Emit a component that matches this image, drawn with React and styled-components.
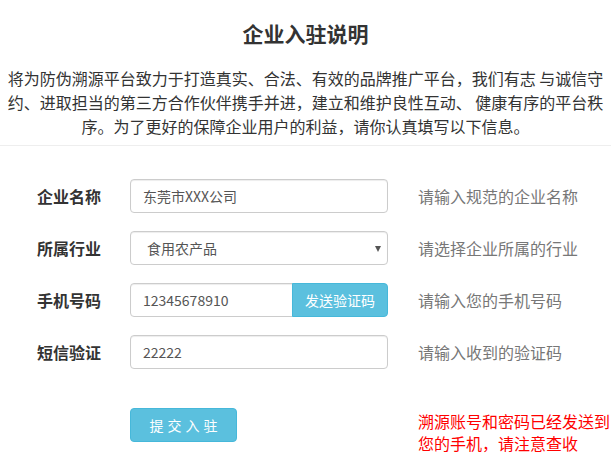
import React from 'react';
import styled, { createGlobalStyle } from 'styled-components';

const GlobalStyle = createGlobalStyle`
    html, body {
        margin: 0;
        padding: 0;
        background: #fff;
    }
    body {
        font-family: "Noto Sans CJK SC", "Liberation Sans", sans-serif;
        color: #333;
    }
`;

const Page = styled.div`
    width: 611px;
`;

const Header = styled.header`
    padding: 18px 4px 7px;
    border-bottom: 1px solid #eee;
    text-align: center;
`;

const Title = styled.h1`
    margin: 0;
    font-size: 21px;
    line-height: 30px;
    font-weight: bold;
    color: #333;
`;

const Intro = styled.p`
    margin: 18px 0 0;
    font-size: 16px;
    line-height: 24px;
    color: #333;
    white-space: nowrap;
`;

const Form = styled.form`
    display: flex;
    flex-direction: column;
    gap: 18px;
    margin-top: 33px;
    padding-left: 37px;
`;

const Row = styled.div`
    display: flex;
    align-items: ${p => (p.$top ? 'flex-start' : 'center')};
    margin-top: ${p => p.$gap || 0}px;
`;

const Label = styled.label`
    width: 93px;
    font-size: 16px;
    font-weight: bold;
    color: #333;
    line-height: 34px;
`;

const Control = styled.div`
    position: relative;
    display: flex;
    width: 258px;
`;

const Input = styled.input`
    box-sizing: border-box;
    width: 100%;
    height: 34px;
    padding: 0 12px;
    border: 1px solid #ccc;
    border-radius: ${p => (p.$joined ? '4px 0 0 4px' : '4px')};
    font-family: inherit;
    font-size: 14px;
    color: #555;
    outline: none;
    box-shadow: inset 0 1px 1px rgba(0, 0, 0, 0.075);
`;

const Select = styled.select`
    box-sizing: border-box;
    width: 100%;
    height: 34px;
    padding: 0 16px;
    border: 1px solid #ccc;
    border-radius: 4px;
    background: #fff;
    font-family: inherit;
    font-size: 14px;
    color: #555;
    appearance: none;
    outline: none;
    box-shadow: inset 0 1px 1px rgba(0, 0, 0, 0.075);
`;

const Caret = styled.span`
    position: absolute;
    right: 7px;
    top: 15px;
    width: 0;
    height: 0;
    border-left: 3.5px solid transparent;
    border-right: 3.5px solid transparent;
    border-top: 6px solid #555;
    pointer-events: none;
`;

const CodeButton = styled.button`
    flex: 0 0 96px;
    height: 34px;
    margin-left: -1px;
    border: 1px solid #46b8da;
    border-radius: 0 4px 4px 0;
    background: #5bc0de;
    color: #fff;
    font-family: inherit;
    font-size: 14px;
    padding: 0;
`;

const Hint = styled.span`
    margin-left: 30px;
    margin-top: ${p => (p.$alert ? '2px' : '0')};
    font-size: 16px;
    line-height: 22px;
    color: ${p => (p.$alert ? '#f00' : '#777')};
`;

const Submit = styled.button`
    width: 107px;
    height: 34px;
    padding: 0 0 0 4px;
    border: 1px solid #46b8da;
    border-radius: 4px;
    background: #5bc0de;
    color: #fff;
    font-family: inherit;
    font-size: 14px;
    letter-spacing: 4px;
`;

const fields = [
    { label: '企业名称', value: '东莞市XXX公司', hint: '请输入规范的企业名称' },
    { label: '所属行业', select: ['食用农产品'], hint: '请选择企业所属的行业' },
    { label: '手机号码', value: '12345678910', code: true, hint: '请输入您的手机号码' },
    { label: '短信验证', value: '22222', hint: '请输入收到的验证码' },
];

const App = () => {
    return (
        <Page>
            <GlobalStyle />
            <Header>
                <Title>企业入驻说明</Title>
                <Intro>
                    将为防伪溯源平台致力于打造真实、合法、有效的品牌推广平台，我们有志 与诚信守<br />
                    约、进取担当的第三方合作伙伴携手并进，建立和维护良性互动、 健康有序的平台秩<br />
                    序。为了更好的保障企业用户的利益，请你认真填写以下信息。
                </Intro>
            </Header>
            <Form onSubmit={e => e.preventDefault()}>
                {fields.map(f => (
                    <Row key={f.label}>
                        <Label>{f.label}</Label>
                        <Control>
                            {f.select ? (
                                <>
                                    <Select defaultValue={f.select[0]}>
                                        {f.select.map(o => <option key={o}>{o}</option>)}
                                    </Select>
                                    <Caret />
                                </>
                            ) : (
                                <Input defaultValue={f.value} $joined={f.code} />
                            )}
                            {f.code && <CodeButton type="button">发送验证码</CodeButton>}
                        </Control>
                        <Hint>{f.hint}</Hint>
                    </Row>
                ))}
                <Row $top $gap={21}>
                    <Label />
                    <Control>
                        <Submit type="submit">提交入驻</Submit>
                    </Control>
                    <Hint $alert>溯源账号和密码已经发送到<br />您的手机，请注意查收</Hint>
                </Row>
            </Form>
        </Page>
    );
};

export default App;
